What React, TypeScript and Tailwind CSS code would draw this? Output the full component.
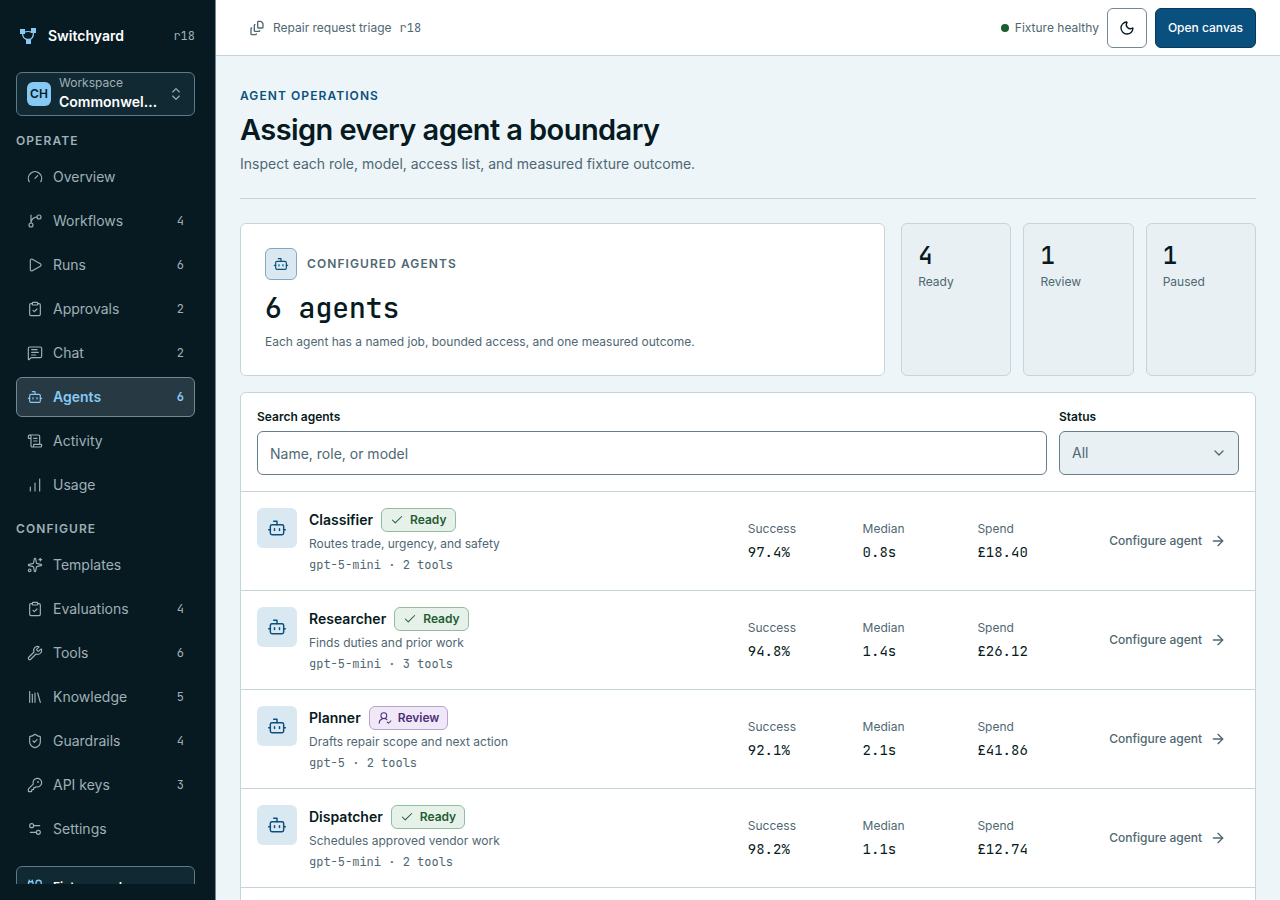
import React, { useState } from 'react';
import {
  ArrowRight,
  Bot,
  Cable,
  ChartNoAxesColumnIncreasing,
  Check,
  ChevronDown,
  ChevronsUpDown,
  ClipboardCheck,
  FileStack,
  Gauge,
  KeyRound,
  Library,
  MessageSquareText,
  Moon,
  Play,
  ScrollText,
  Settings2,
  ShieldCheck,
  Sparkles,
  UserRoundCheck,
  Wrench,
  createLucideIcon,
  type LucideIcon,
} from 'lucide-react';

// Types
interface NavItem {
  label: string;
  icon: LucideIcon;
  count?: number;
}

interface NavGroup {
  title: string;
  items: NavItem[];
}

type Status = 'Ready' | 'Review' | 'Paused';

interface Agent {
  name: string;
  status: Status;
  role: string;
  model: string;
  tools: number;
  success: string;
  median: string;
  spend: string;
}

const mono = "font-['JetBrains_Mono','DejaVu_Sans_Mono',monospace]";

// Branch that curves off the trunk into the upper node
const BranchIcon = createLucideIcon('branch', [
  ['path', { d: 'M15 6a9 9 0 0 0-9 9V3', key: 'trunk' }],
  ['circle', { cx: '18', cy: '6', r: '3', key: 'upper' }],
  ['circle', { cx: '6', cy: '18', r: '3', key: 'lower' }],
]);

// Navigation data
const navGroups: NavGroup[] = [
  {
    title: 'Operate',
    items: [
      { label: 'Overview', icon: Gauge },
      { label: 'Workflows', icon: BranchIcon, count: 4 },
      { label: 'Runs', icon: Play, count: 6 },
      { label: 'Approvals', icon: ClipboardCheck, count: 2 },
      { label: 'Chat', icon: MessageSquareText, count: 2 },
      { label: 'Agents', icon: Bot, count: 6 },
      { label: 'Activity', icon: ScrollText },
      { label: 'Usage', icon: ChartNoAxesColumnIncreasing },
    ],
  },
  {
    title: 'Configure',
    items: [
      { label: 'Templates', icon: Sparkles },
      { label: 'Evaluations', icon: ClipboardCheck, count: 4 },
      { label: 'Tools', icon: Wrench, count: 6 },
      { label: 'Knowledge', icon: Library, count: 5 },
      { label: 'Guardrails', icon: ShieldCheck, count: 4 },
      { label: 'API keys', icon: KeyRound, count: 3 },
      { label: 'Settings', icon: Settings2 },
    ],
  },
];

const totals: { value: number; label: Status }[] = [
  { value: 4, label: 'Ready' },
  { value: 1, label: 'Review' },
  { value: 1, label: 'Paused' },
];

// Agent data
const agents: Agent[] = [
  { name: 'Classifier', status: 'Ready', role: 'Routes trade, urgency, and safety', model: 'gpt-5-mini', tools: 2, success: '97.4%', median: '0.8s', spend: '£18.40' },
  { name: 'Researcher', status: 'Ready', role: 'Finds duties and prior work', model: 'gpt-5-mini', tools: 3, success: '94.8%', median: '1.4s', spend: '£26.12' },
  { name: 'Planner', status: 'Review', role: 'Drafts repair scope and next action', model: 'gpt-5', tools: 2, success: '92.1%', median: '2.1s', spend: '£41.86' },
  { name: 'Dispatcher', status: 'Ready', role: 'Schedules approved vendor work', model: 'gpt-5-mini', tools: 2, success: '98.2%', median: '1.1s', spend: '£12.74' },
];

const Logo = () => (
  <svg width="16" height="16" viewBox="0 0 16 16" fill="none" aria-hidden="true">
    <path d="M2.5 5C2.5 9 4.5 11.5 8.5 11.5S13.5 8.5 13.5 4.5" stroke="currentColor" strokeWidth="1.3" />
    <path d="M4 4.3C6 3.3 10 3.3 12 4.3" stroke="currentColor" strokeWidth="1.3" />
    <path d="M0 1h5v5H0zM11 0h5v5h-5zM6 11h5v5H6z" fill="currentColor" />
  </svg>
);

const Sidebar = () => (
  <aside className="sticky top-0 h-screen w-[216px] shrink-0 border-r border-[#6f8a95] bg-[#071a21] py-4 pr-5 pl-4">
    <div className="flex h-full flex-col gap-[17px] overflow-y-auto [scrollbar-width:none]">
      <div className="flex shrink-0 flex-col gap-4">
        <div className="flex h-10 items-center gap-3 pl-1">
          <span className="text-[#86c9f4]"><Logo /></span>
          <span className="flex-1 text-sm font-semibold text-white">Switchyard</span>
          <span className={`text-xs text-[#9fb0b7] ${mono}`}>r18</span>
        </div>

        <button
          type="button"
          className="flex h-11 w-full items-center gap-2 rounded-md border border-[#5f7a86] bg-[#112933] px-2.5 text-left"
        >
          <span className="flex size-6 shrink-0 items-center justify-center rounded-md bg-[#86c9f4] text-xs font-semibold text-[#071a21]">
            CH
          </span>
          <span className="min-w-0 flex-1 pb-0.5">
            <span className="block text-xs leading-[18px] text-[#9fb0b7]">Workspace</span>
            <span className="block truncate text-sm font-semibold text-white">Commonwell Housing</span>
          </span>
          <ChevronsUpDown className="size-4 shrink-0 text-[#9fb0b7]" strokeWidth={1.75} />
        </button>
      </div>

      <nav className="flex shrink-0 flex-col gap-4">
        {navGroups.map((group) => (
          <div key={group.title}>
            <h2 className="mb-2 text-xs leading-4 font-semibold tracking-[0.09em] text-[#9fb0b7] uppercase">
              {group.title}
            </h2>
            <ul className="flex flex-col gap-1">
              {group.items.map(({ label, icon: Icon, count }) => {
                const active = label === 'Agents';
                return (
                  <li key={label}>
                    <a
                      href="#"
                      aria-current={active ? 'page' : undefined}
                      className={`flex h-10 items-center gap-2.5 rounded-md border px-2.5 text-sm ${
                        active
                          ? 'border-[#6f8a95] bg-[#273a43] font-semibold text-[#86c9f4]'
                          : 'border-transparent text-[#9fb0b7]'
                      }`}
                    >
                      <Icon className="size-4 shrink-0" strokeWidth={1.75} />
                      <span className="flex-1">{label}</span>
                      {count !== undefined && <span className={`text-xs leading-[18px] ${mono}`}>{count}</span>}
                    </a>
                  </li>
                );
              })}
            </ul>
          </div>
        ))}
      </nav>

      <div className="shrink-0 rounded-md border border-[#5f7a86] bg-[#112933] px-2.5 py-[11px]">
        <div className="flex items-center gap-2">
          <Cable className="size-[18px] text-[#86c9f4]" strokeWidth={1.75} />
          <span className="text-xs font-semibold text-white">Fixture mode</span>
        </div>
      </div>
    </div>
  </aside>
);

const Topbar = () => (
  <header className="flex h-14 items-center justify-between border-b border-[#c5d5dc] bg-white px-6">
    <a
      href="#"
      className="flex items-center gap-2 border border-transparent px-2 text-xs leading-[18px] text-[#4f6772]"
    >
      <FileStack className="size-4" strokeWidth={2} />
      <span>Repair request triage</span>
      <span className={mono}>r18</span>
    </a>
    <div className="flex items-center gap-2">
      <span className="flex items-center gap-1.5 text-xs leading-[18px] text-[#4f6772]">
        <span className="size-2 rounded-full bg-[#1b5e2f]"></span>
        Fixture healthy
      </span>
      <button
        type="button"
        aria-label="Switch theme"
        className="flex size-10 items-center justify-center rounded-md border border-[#6f8a95] bg-white text-[#071a21]"
      >
        <Moon className="size-4" strokeWidth={2} />
      </button>
      <button
        type="button"
        className="h-10 rounded-md border border-[#06395c] bg-[#0a507e] px-3 text-xs leading-[18px] font-medium text-white"
      >
        Open canvas
      </button>
    </div>
  </header>
);

const StatusBadge = ({ status }: { status: Status }) => {
  const ready = status === 'Ready';
  const Icon = ready ? Check : UserRoundCheck;
  return (
    <span
      className={`flex h-6 items-center gap-1.5 rounded-md border px-2 text-xs font-semibold ${
        ready
          ? 'border-[#93bd9f] bg-[#e6f1e9] text-[#1f5c31]'
          : 'border-[#b9a1d3] bg-[#efe8f6] text-[#51307a]'
      }`}
    >
      <Icon className="size-3.5" strokeWidth={1.75} />
      {status}
    </span>
  );
};

const AgentRow = ({ agent }: { agent: Agent }) => {
  const stats = [
    ['Success', agent.success],
    ['Median', agent.median],
    ['Spend', agent.spend],
  ];

  return (
    <li className="grid grid-cols-[10fr_7fr_auto] items-center gap-4 border-b border-[#c5d5dc] p-4">
      <div className="flex items-start gap-3">
        <span className="flex size-10 shrink-0 items-center justify-center rounded-md bg-[#dae8f1] text-[#0a507e]">
          <Bot className="size-5" strokeWidth={1.75} />
        </span>
        <div className="flex flex-col gap-[3px]">
          <div className="flex h-6 items-center gap-2">
            <h3 className="text-sm font-semibold text-[#071a21]">{agent.name}</h3>
            <StatusBadge status={agent.status} />
          </div>
          <p className="text-xs leading-[18px] text-[#4f6772]">{agent.role}</p>
          <p className={`text-xs leading-[18px] text-[#4f6772] ${mono}`}>
            {agent.model} · {agent.tools} tools
          </p>
        </div>
      </div>

      <dl className="grid grid-cols-3 gap-3">
        {stats.map(([label, value]) => (
          <div key={label} className="flex flex-col gap-1">
            <dt className="text-xs leading-[18px] text-[#4f6772]">{label}</dt>
            <dd className={`text-sm text-[#071a21] ${mono}`}>{value}</dd>
          </div>
        ))}
      </dl>

      <button
        type="button"
        className="flex h-10 items-center gap-2 border border-transparent px-3 text-xs font-medium text-[#4f6772]"
      >
        Configure agent
        <ArrowRight className="size-4" strokeWidth={2} />
      </button>
    </li>
  );
};

const App = () => {
  const [query, setQuery] = useState('');
  const [status, setStatus] = useState('All');

  const visible = agents.filter(
    (agent) =>
      (status === 'All' || agent.status === status) &&
      `${agent.name} ${agent.role} ${agent.model}`.toLowerCase().includes(query.toLowerCase())
  );

  return (
    <div className="flex h-screen overflow-hidden bg-[#edf5f9] font-['Inter',sans-serif] text-[#071a21]">
      <Sidebar />

      <div className="flex min-w-0 flex-1 flex-col">
        <Topbar />

        <main className="min-h-0 flex-1 overflow-hidden px-6 pt-8">
          {/* Page heading */}
          <div className="border-b border-[#c5d5dc] pb-6">
            <p className="text-xs font-semibold tracking-[0.09em] text-[#0a507e] uppercase">Agent operations</p>
            <h1 className="mt-2 text-[29px] leading-9 font-semibold tracking-[-0.02em]">
              Assign every agent a boundary
            </h1>
            <p className="mt-1.5 text-sm text-[#4f6772]">
              Inspect each role, model, access list, and measured fixture outcome.
            </p>
          </div>

          {/* Summary */}
          <section className="mt-6 grid grid-cols-[20fr_11fr] gap-4">
            <div className="rounded-md border border-[#c5d5dc] bg-white p-6">
              <div className="flex items-center gap-2.5">
                <span className="flex size-8 items-center justify-center rounded-md border border-[#84a8c0] bg-[#dae8f1] text-[#0a507e]">
                  <Bot className="size-4" strokeWidth={1.75} />
                </span>
                <h2 className="text-xs font-semibold tracking-[0.09em] text-[#4f6772] uppercase">Configured agents</h2>
              </div>
              <p className={`mt-3 mb-[9px] text-[28px] leading-8 font-medium ${mono}`}>6 agents</p>
              <p className="text-xs leading-[18px] text-[#4f6772]">
                Each agent has a named job, bounded access, and one measured outcome.
              </p>
            </div>
            <div className="grid grid-cols-3 gap-3">
              {totals.map(({ value, label }) => (
                <div key={label} className="rounded-md border border-[#c5d5dc] bg-[#e8f0f4] p-4">
                  <p className={`mb-px text-2xl leading-8 font-medium ${mono}`}>{value}</p>
                  <p className="text-xs leading-[18px] text-[#4f6772]">{label}</p>
                </div>
              ))}
            </div>
          </section>

          {/* Agent list */}
          <section className="mt-4 rounded-md border border-[#c5d5dc] bg-white">
            <div className="grid grid-cols-[1fr_180px] gap-3 border-b border-[#c5d5dc] p-4">
              <div>
                <label htmlFor="search" className="mb-1.5 block text-xs font-semibold">
                  Search agents
                </label>
                <input
                  id="search"
                  type="search"
                  value={query}
                  onChange={(e) => setQuery(e.target.value)}
                  placeholder="Name, role, or model"
                  className="h-11 w-full rounded-md border border-[#64808c] bg-white px-3 text-sm placeholder:text-[#4f6772]"
                />
              </div>
              <div>
                <label htmlFor="status" className="mb-1.5 block text-xs font-semibold">
                  Status
                </label>
                <div className="relative">
                  <select
                    id="status"
                    value={status}
                    onChange={(e) => setStatus(e.target.value)}
                    className="h-11 w-full appearance-none rounded-md border border-[#64808c] bg-[#e8f0f4] px-3 text-sm text-[#4f6772]"
                  >
                    <option>All</option>
                    <option>Ready</option>
                    <option>Review</option>
                    <option>Paused</option>
                  </select>
                  <ChevronDown
                    className="pointer-events-none absolute top-3.5 right-3 size-4 text-[#4f6772]"
                    strokeWidth={2}
                  />
                </div>
              </div>
            </div>
            <ul className="pb-10">
              {visible.map((agent) => (
                <AgentRow key={agent.name} agent={agent} />
              ))}
            </ul>
          </section>
        </main>
      </div>
    </div>
  );
};

export default App;
